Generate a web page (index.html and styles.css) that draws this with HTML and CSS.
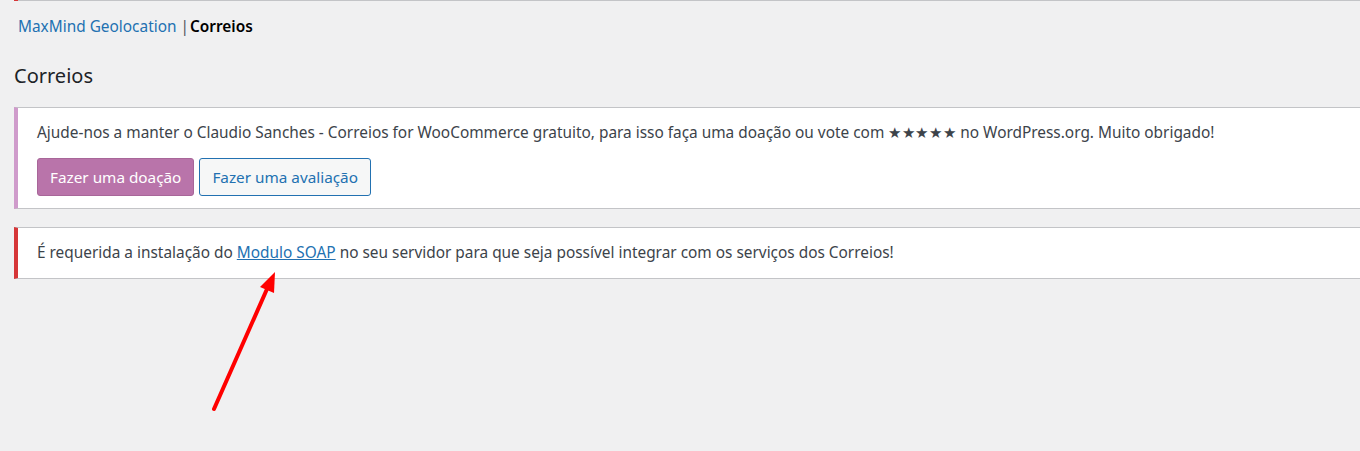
FILE: index.html
```html
<!DOCTYPE html>
<html lang="pt-BR">
<head>
<meta charset="utf-8">
<title>Correios</title>
<link rel="stylesheet" href="styles.css">
</head>
<body>
<div class="prev-notice-edge"></div>
<div class="wrap">
  <ul class="subsubsub">
    <li><a href="#">MaxMind Geolocation</a> <span class="sep">|</span></li>
    <li><a href="#" class="current">Correios</a></li>
  </ul>
  <h2 class="page-title">Correios</h2>
  <div class="notice notice-donate">
    <p>Ajude-nos a manter o Claudio Sanches - Correios for WooCommerce gratuito, para isso faça uma doação ou vote com <span class="stars">★★★★★</span> no WordPress.org. Muito obrigado!</p>
    <p class="actions">
      <a href="#" class="button button-donate">Fazer uma doação</a>
      <a href="#" class="button button-secondary">Fazer uma avaliação</a>
    </p>
  </div>
  <div class="notice notice-error">
    <p>É requerida a instalação do <a href="#">Modulo SOAP</a> no seu servidor para que seja possível integrar com os serviços dos Correios!</p>
  </div>
</div>
<svg class="arrow" width="90" height="160" viewBox="0 0 90 160" aria-hidden="true">
  <line x1="14" y1="148" x2="67" y2="28" stroke="#ff0000" stroke-width="4" stroke-linecap="round"/>
  <polygon points="75,11 60,26 74,32" fill="#ff0000"/>
</svg>
</body>
</html>
```
FILE: styles.css
```css
html, body {
  margin: 0;
  padding: 0;
}
body {
  background: #f0f0f1;
  color: #3c434a;
  font-family: "Noto Sans", "Open Sans", sans-serif;
  font-size: 15.4px;
  line-height: 20px;
  position: relative;
  min-height: 451px;
  overflow: hidden;
}
.prev-notice-edge {
  height: 1px;
  margin-left: 14px;
  background: #c3c4c7;
  border-left: 4px solid #d63638;
}
.wrap {
  padding-left: 14px;
}
.subsubsub {
  list-style: none;
  margin: 0;
  padding: 15px 0 0 4px;
  display: flex;
  gap: 1px;
  line-height: 22px;
}
.subsubsub a {
  color: #2271b1;
  text-decoration: none;
}
.subsubsub .sep {
  color: #50575e;
}
.subsubsub a.current {
  color: #000;
  font-weight: 600;
}
.page-title {
  margin: 24px 0 0;
  font-size: 20px;
  font-weight: 400;
  line-height: 28px;
  color: #1d2327;
}
.notice {
  background: #fff;
  border: 1px solid #c3c4c7;
  border-right: 0;
  border-left-width: 4px;
  padding: 1px 12px 1px 19px;
}
.notice p {
  margin: 0;
}
.stars {
  letter-spacing: 0.6px;
}
.notice-donate {
  margin-top: 17px;
  border-left-color: #cf9bcb;
  padding-top: 15px;
  padding-bottom: 12px;
}
.notice-donate .actions {
  margin-top: 15px;
  display: flex;
  gap: 5px;
}
.button {
  display: inline-flex;
  align-items: center;
  height: 38px;
  box-sizing: border-box;
  padding: 0 12px;
  border: 1px solid;
  border-radius: 3px;
  text-decoration: none;
  font-size: 15.3px;
}
.button-donate {
  background: #b974aa;
  border-color: #a86699;
  color: #fff;
}
.button-secondary {
  background: #f6f7f7;
  border-color: #2271b1;
  color: #2271b1;
}
.notice-error {
  margin-top: 18px;
  border-left-color: #d63638;
  padding-top: 15px;
  padding-bottom: 15px;
}
.notice-error a {
  color: #2271b1;
  text-decoration: underline;
}
.arrow {
  position: absolute;
  left: 200px;
  top: 261px;
}
```
